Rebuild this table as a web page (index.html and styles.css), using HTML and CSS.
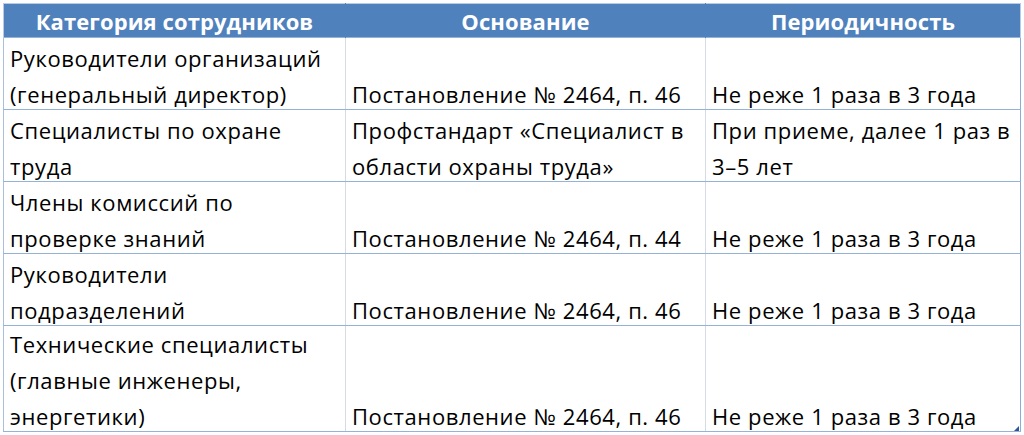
FILE: index.html
```html
<!DOCTYPE html>
<html lang="ru">
<head>
<meta charset="utf-8">
<link rel="stylesheet" href="styles.css">
</head>
<body>
<div class="sheet">
<table class="grid">
<colgroup><col class="c1"><col class="c2"><col class="c3"></colgroup>
<thead>
<tr><th>Категория сотрудников</th><th>Основание</th><th>Периодичность</th></tr>
</thead>
<tbody>
<tr class="r2"><td><div class="tx">Руководители организаций (генеральный директор)</div></td><td><div class="tx">Постановление № 2464, п. 46</div></td><td><div class="tx">Не реже 1 раза в 3 года</div></td></tr>
<tr class="r2"><td><div class="tx">Специалисты по охране труда</div></td><td><div class="tx">Профстандарт «Специалист в области охраны труда»</div></td><td><div class="tx">При приеме, далее 1 раз в 3–5 лет</div></td></tr>
<tr class="r2"><td><div class="tx">Члены комиссий по проверке знаний</div></td><td><div class="tx">Постановление № 2464, п. 44</div></td><td><div class="tx">Не реже 1 раза в 3 года</div></td></tr>
<tr class="r2"><td><div class="tx">Руководители подразделений</div></td><td><div class="tx">Постановление № 2464, п. 46</div></td><td><div class="tx">Не реже 1 раза в 3 года</div></td></tr>
<tr class="r3"><td><div class="tx">Технические специалисты (главные инженеры, энергетики)</div></td><td><div class="tx">Постановление № 2464, п. 46</div></td><td><div class="tx">Не реже 1 раза в 3 года</div></td></tr>
</tbody>
</table>
<span class="handle"></span>
</div>
</body>
</html>
```
FILE: styles.css
```css
html, body {
  margin: 0;
  padding: 0;
  background: #ffffff;
}
body {
  font-family: "Open Sans", "Noto Sans", sans-serif;
  color: #000;
}
.sheet {
  position: relative;
  padding: 3px 0 0 3px;
  width: 1017px;
}
.grid {
  border-collapse: collapse;
  table-layout: fixed;
  width: 1017px;
}
.c1 { width: 342px; }
.c2 { width: 360px; }
.c3 { width: 315px; }
.grid th {
  background: #4f81bd;
  color: #fff;
  font-weight: 700;
  font-size: 22px;
  letter-spacing: 0.1px;
  height: 33px;
  padding: 0;
  text-align: center;
  vertical-align: middle;
  border-left: 1px solid #4f81bd;
  border-right: 1px solid #4f81bd;
  border-top: 1px solid #b8cce4;
}
.grid th:last-child { border-right-color: #b9cbe4; }
.grid th:first-child { border-left-color: #b9cbe4; }
.grid td {
  font-size: 22px;
  letter-spacing: 0.6px;
  line-height: 36px;
  padding: 0 4px 0 6px;
  vertical-align: bottom;
  text-align: left;
  border-top: 1px solid #95b3d7;
  border-bottom: 1px solid #95b3d7;
  border-left: 1px solid #d4dbe6;
  border-right: 1px solid #d4dbe6;
  white-space: normal;
}
.tx {
  margin-bottom: -3px;
}
.grid td:first-child { border-left-color: #a9bfdc; }
.grid td:last-child { border-right-color: #8eaad6; }
.r2 td { height: 71px; }
.r3 td { height: 105px; }
.handle {
  position: absolute;
  left: 1014px;
  top: 426px;
  width: 5px;
  height: 5px;
  background: #2f5597;
  clip-path: polygon(100% 0, 100% 100%, 0 100%);
}
```
